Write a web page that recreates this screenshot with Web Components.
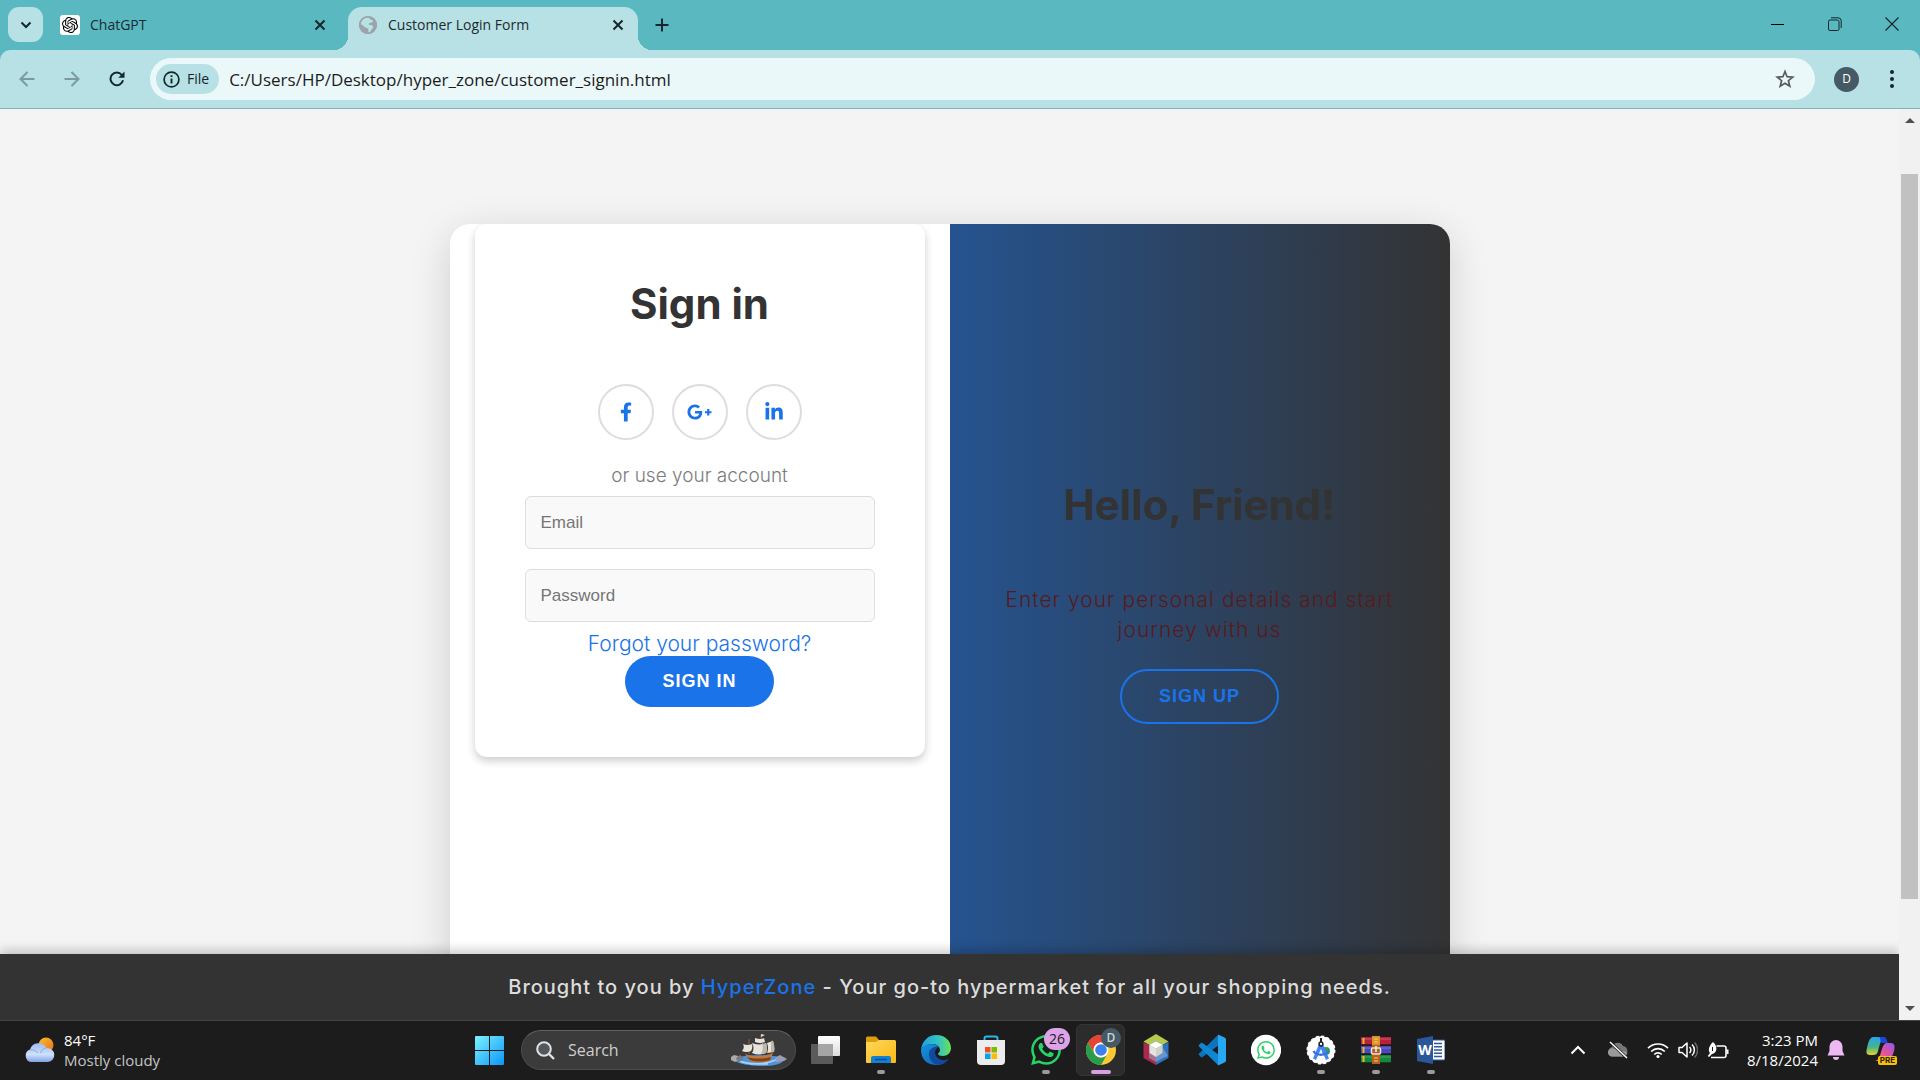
<!DOCTYPE html>
<html lang="en">
<head>
<meta charset="utf-8">
<title>Customer Login Form</title>
<style>
  html, body { margin: 0; height: 100%; }
  body {
    --strip: #5ab8c1;
    --chrome: #b7e1e5;
    --ink: #1d2b2e;
    --blue: #1a73e8;
    --dark: #333;
    --ui: "Open Sans", "Noto Sans", sans-serif;
    --body: Inter, "Open Sans", sans-serif;
    font-family: var(--ui);
    overflow: hidden;
    background: #1c1c1c;
  }
</style>
</head>
<body>
<desktop-screen></desktop-screen>
<script>
const define = (name, html) => {
  const template = document.createElement('template');
  template.innerHTML = `<style>
    *, *::before, *::after { box-sizing: border-box; }
    button { border: 0; margin: 0; padding: 0; background: none; color: inherit; font: inherit; display: grid; place-items: center; }
    svg { display: block; }
    a { text-decoration: none; }
  </style>` + html;
  customElements.define(name, class extends HTMLElement {
    constructor() {
      super();
      this.attachShadow({ mode: 'open' }).append(template.content.cloneNode(true));
    }
    connectedCallback() {
      for (const part of this.shadowRoot.querySelectorAll('[data-attrs]')) {
        for (const key of part.dataset.attrs.split(' ')) {
          if (this.hasAttribute(key)) part.setAttribute(key === 'label' ? 'aria-label' : key, this.getAttribute(key));
        }
      }
    }
  });
};

const WHATSAPP = 'M17.472 14.382c-.297-.149-1.758-.867-2.03-.967-.273-.099-.471-.148-.67.15-.197.297-.767.966-.94 1.164-.173.199-.347.223-.644.075-.297-.15-1.255-.463-2.39-1.475-.883-.788-1.48-1.761-1.653-2.059-.173-.297-.018-.458.13-.606.134-.133.298-.347.446-.52.149-.174.198-.298.298-.497.099-.198.05-.371-.025-.52-.075-.149-.669-1.612-.916-2.207-.242-.579-.487-.5-.669-.51-.173-.008-.371-.01-.57-.01-.198 0-.52.074-.792.372-.272.297-1.04 1.016-1.04 2.479 0 1.462 1.065 2.875 1.213 3.074.149.198 2.096 3.2 5.077 4.487.709.306 1.262.489 1.694.625.712.227 1.36.195 1.871.118.571-.085 1.758-.719 2.006-1.413.248-.694.248-1.289.173-1.413-.074-.124-.272-.198-.57-.347m-5.421 7.403h-.004a9.87 9.87 0 01-5.031-1.378l-.361-.214-3.741.982.998-3.648-.235-.374a9.86 9.86 0 01-1.51-5.26c.001-5.45 4.436-9.884 9.888-9.884 2.64 0 5.122 1.03 6.988 2.898a9.825 9.825 0 012.893 6.994c-.003 5.45-4.437 9.884-9.885 9.884m8.413-18.297A11.815 11.815 0 0012.05 0C5.495 0 .16 5.335.157 11.892c0 2.096.547 4.142 1.588 5.945L.057 24l6.305-1.654a11.882 11.882 0 005.683 1.448h.005c6.554 0 11.89-5.335 11.893-11.893a11.821 11.821 0 00-3.48-8.413z';

/* ---------- browser window ---------- */

define('browser-tab', `
<style>
  :host { display: flex; align-items: center; width: 290px; height: 43px; padding: 0 13px 8px 10px; gap: 10px; color: var(--ink); position: relative; }
  :host([active]) { background: var(--chrome); border-radius: 14px 14px 0 0; }
  :host([active])::before, :host([active])::after { content: ""; position: absolute; bottom: 0; width: 14px; height: 14px; }
  :host([active])::before { right: 100%; background: radial-gradient(circle at 0 0, transparent 14px, var(--chrome) 14px); }
  :host([active])::after { left: 100%; background: radial-gradient(circle at 100% 0, transparent 14px, var(--chrome) 14px); }
  .title { flex: 1; font-size: 14px; line-height: 20px; white-space: nowrap; }
  button { width: 14px; height: 14px; }
</style>
<slot name="icon"></slot>
<span class="title"><slot></slot></span>
<button aria-label="Close tab"><svg width="12" height="12" viewBox="0 0 12 12" stroke="#16262a" stroke-width="2" fill="none"><path d="M1.500 1.500l9 9M10.500 1.500l-9 9"/></svg></button>
`);

define('window-controls', `
<style>
  :host { display: flex; margin-left: auto; height: 48px; }
  button { width: 57px; height: 48px; }
</style>
<button aria-label="Minimize"><svg width="14" height="14" viewBox="0 0 14 14"><path d="M0 7.500h13" stroke="#000"/></svg></button>
<button aria-label="Restore"><svg width="14" height="14" viewBox="0 0 14 14" fill="none" stroke="#10282b"><rect x=".5" y="3" width="10.500" height="10.500" rx="1.500"/><path d="M3 .8h7.200a3 3 0 0 1 3 3V11"/></svg></button>
<button aria-label="Close"><svg width="14" height="14" viewBox="0 0 14 14" stroke="#10282b" stroke-width="1.200"><path d="M.5.5l13 13M13.500.5l-13 13"/></svg></button>
`);

define('tab-strip', `
<style>
  :host { display: flex; height: 50px; padding: 7px 0 0 8px; background: var(--strip); }
  .menu { width: 35px; height: 35px; border-radius: 11px; background: var(--chrome); margin-right: 7px; }
  .tabs { display: flex; gap: 8px; }
  .new { width: 28px; height: 35px; margin-left: 10px; }
  .badge { width: 20px; height: 20px; border-radius: 3px; background: #fff; display: grid; place-items: center; }
  window-controls { margin-top: -7px; }
</style>
<button class="menu" aria-label="Search tabs"><svg width="12" height="8" viewBox="0 0 12 8" fill="none" stroke="#10282b" stroke-width="2"><path d="M1.500 1.500L6 6l4.500-4.500"/></svg></button>
<div class="tabs">
  <browser-tab>
    <span slot="icon" class="badge"><svg width="16" height="16" viewBox="0 0 24 24"><path d="M22.2819 9.8211a5.9847 5.9847 0 0 0-.5157-4.9108 6.0462 6.0462 0 0 0-6.5098-2.9A6.0651 6.0651 0 0 0 4.9807 4.1818a5.9847 5.9847 0 0 0-3.9977 2.9 6.0462 6.0462 0 0 0 .7427 7.0966 5.98 5.98 0 0 0 .511 4.9107 6.051 6.051 0 0 0 6.5146 2.9001A5.9847 5.9847 0 0 0 13.2599 24a6.0557 6.0557 0 0 0 5.7718-4.2058 5.9894 5.9894 0 0 0 3.9977-2.9001 6.0557 6.0557 0 0 0-.7475-7.0729zm-9.022 12.6081a4.4755 4.4755 0 0 1-2.8764-1.0408l.1419-.0804 4.7783-2.7582a.7948.7948 0 0 0 .3927-.6813v-6.7369l2.02 1.1686a.071.071 0 0 1 .038.052v5.5826a4.504 4.504 0 0 1-4.4945 4.4944zm-9.6607-4.1254a4.4708 4.4708 0 0 1-.5346-3.0137l.142.0852 4.783 2.7582a.7712.7712 0 0 0 .7806 0l5.8428-3.3685v2.3324a.0804.0804 0 0 1-.0332.0615L9.74 19.9502a4.4992 4.4992 0 0 1-6.1408-1.6464zM2.3408 7.8956a4.485 4.485 0 0 1 2.3655-1.9728V11.6a.7664.7664 0 0 0 .3879.6765l5.8144 3.3543-2.0201 1.1685a.0757.0757 0 0 1-.071 0l-4.8303-2.7865A4.504 4.504 0 0 1 2.3408 7.872zm16.5963 3.8558L13.1038 8.364 15.1192 7.2a.0757.0757 0 0 1 .071 0l4.8303 2.7913a4.4944 4.4944 0 0 1-.6765 8.1042v-5.6772a.79.79 0 0 0-.407-.667zm2.0107-3.0231l-.142-.0852-4.7735-2.7818a.7759.7759 0 0 0-.7854 0L9.409 9.2297V6.8974a.0662.0662 0 0 1 .0284-.0615l4.8303-2.7866a4.4992 4.4992 0 0 1 6.6802 4.66zM8.3065 12.863l-2.02-1.1638a.0804.0804 0 0 1-.038-.0567V6.0742a4.4992 4.4992 0 0 1 7.3757-3.4537l-.142.0805L8.704 5.459a.7948.7948 0 0 0-.3927.6813zm1.0976-2.3654l2.602-1.4998 2.6069 1.4998v2.9994l-2.5974 1.4997-2.6067-1.4997Z"/></svg></span>
    ChatGPT
  </browser-tab>
  <browser-tab active>
    <svg slot="icon" width="20" height="20" viewBox="0 0 20 20"><circle cx="10" cy="10" r="9" fill="#9ca4ab"/><path d="M9.500 2.500c3 0 1.500 2 3.500 2.200 1.800.2 2.600 1.400 1.500 2.200-1.200.9-3 .4-3.600 1.600-.5 1.100.6 1.500 2 1.500 1.700.1 2.600 1.500 2 3-.7 1.800-2.700 2.100-2.800 3.900-.1 1-1.700.8-1.800-.4-.1-1.500.5-2.200-.3-3C9 12.700 7 13 6 11.600 5.300 10.500 4 9.500 2.600 9.300 3 5.500 5.800 2.600 9.500 2.500z" fill="#b7e1e5"/><circle cx="10" cy="10" r="8.300" fill="none" stroke="#9ca4ab" stroke-width="1.600"/></svg>
    Customer Login Form
  </browser-tab>
</div>
<button class="new" aria-label="New tab"><svg width="14" height="14" viewBox="0 0 14 14" stroke="#16262a" stroke-width="2"><path d="M7 .5v13M.5 7h13"/></svg></button>
<window-controls></window-controls>
`);

define('address-bar', `
<style>
  :host { display: flex; align-items: center; flex: 1; height: 42px; padding: 0 20px 0 6px; gap: 10px; border-radius: 21px; background: #ebf8f9; }
  .chip { display: flex; align-items: center; gap: 7px; height: 30px; padding: 0 10px 0 7px; border-radius: 15px; background: var(--chrome); font-size: 14px; line-height: 20px; color: #16262a; }
  input { flex: 1; min-width: 0; height: 30px; padding: 0; border: 0; outline: 0; background: none; font: 17px/24px var(--ui); color: #1c1c1c; }
</style>
<button class="chip"><svg width="17" height="17" viewBox="0 0 17 17"><circle cx="8.500" cy="8.500" r="7.400" fill="none" stroke="#10282b" stroke-width="1.700"/><path d="M8.500 4.200v1.900M8.500 7.500v5" stroke="#10282b" stroke-width="1.900"/></svg>File</button>
<input type="text" aria-label="Address" value="C:/Users/HP/Desktop/hyper_zone/customer_signin.html">
<button aria-label="Bookmark"><svg width="20" height="20" viewBox="0 0 20 20" fill="none" stroke="#57595c" stroke-width="1.700"><path d="M10 2.500l2.100 5.200 5.600.4-4.300 3.600 1.400 5.500L10 14.200l-4.800 3 1.400-5.500L2.300 8.100l5.600-.4z"/></svg></button>
`);

define('browser-toolbar', `
<style>
  :host { display: block; background: var(--strip); }
  .bar { display: flex; align-items: center; height: 59px; padding: 0 17px 0 11px; background: var(--chrome); border-bottom: 1px solid #87b0b6; border-radius: 10px 10px 0 0; }
  nav { display: flex; gap: 13px; margin-right: 17px; }
  nav button { width: 32px; height: 32px; }
  .avatar { width: 25px; height: 25px; margin: 0 22px 0 19px; border-radius: 50%; background: #455a64; color: #fff; font-size: 12px; line-height: 16px; }
  .more { width: 22px; height: 32px; }
</style>
<div class="bar">
  <nav>
    <button aria-label="Back"><svg width="16" height="16" viewBox="0 0 16 16" fill="none" stroke="#7c9a9e" stroke-width="2"><path d="M15.500 8H2M8.500 1L1.500 8l7 7"/></svg></button>
    <button aria-label="Forward"><svg width="16" height="16" viewBox="0 0 16 16" fill="none" stroke="#7c9a9e" stroke-width="2"><path d="M.5 8H14M7.500 1l7 7-7 7"/></svg></button>
    <button aria-label="Reload"><svg width="16" height="16" viewBox="0 0 16 16"><path d="M14 9.200A6.300 6.300 0 1 1 12.800 4" fill="none" stroke="#10282b" stroke-width="2"/><path d="M15.500.5v6.200H9.300z" fill="#10282b"/></svg></button>
  </nav>
  <address-bar></address-bar>
  <button class="avatar">D</button>
  <button class="more" aria-label="Menu"><svg width="4" height="18" viewBox="0 0 4 18" fill="#16262a"><circle cx="2" cy="2" r="2"/><circle cx="2" cy="9" r="2"/><circle cx="2" cy="16" r="2"/></svg></button>
</div>
`);

define('page-scrollbar', `
<style>
  :host { display: flex; flex-direction: column; align-items: center; width: 21px; background: #f1f1f1; }
  svg { margin: 9px 0; }
  .track { flex: 1; width: 17px; display: flex; flex-direction: column; }
  .above { flex: 42; } .thumb { flex: 725; background: #c1c1c1; } .below { flex: 98; }
</style>
<svg width="10" height="5" viewBox="0 0 10 5"><path d="M0 5L5 0l5 5z" fill="#505050"/></svg>
<div class="track"><div class="above"></div><div class="thumb"></div><div class="below"></div></div>
<svg width="10" height="5" viewBox="0 0 10 5"><path d="M0 0l5 5 5-5z" fill="#505050"/></svg>
`);

/* ---------- login page ---------- */

define('social-link', `
<style>
  :host { display: block; }
  a { display: grid; place-items: center; width: 56px; height: 56px; border: 2px solid #ddd; border-radius: 50%; color: var(--blue); }
</style>
<a href="#" data-attrs="label"><slot></slot></a>
`);

define('form-field', `
<style>
  :host { display: block; }
  input { display: block; width: 100%; height: 53px; padding: 0 15px; border: 1px solid #ddd; border-radius: 6px; background: #f9f9f9; outline: 0; font: 17px/24px "Liberation Sans", Arial, sans-serif; color: #333; }
  input::placeholder { color: #757575; }
</style>
<input data-attrs="type placeholder label">
`);

define('pill-button', `
<style>
  :host { display: block; }
  button { padding: 15px 37px; border-radius: 28px; background: var(--blue); color: #fff; font: bold 18px/21px "Liberation Sans", Arial, sans-serif; letter-spacing: 1px; }
  :host([ghost]) button { border: 2px solid var(--blue); background: transparent; color: var(--blue); }
</style>
<button><slot></slot></button>
`);

define('page-heading', `
<style>
  :host { display: block; }
  h1 { margin: 0 0 50px; font: 700 42px/60px var(--body); color: var(--dark); text-align: center; }
</style>
<h1><slot></slot></h1>
`);

define('signin-form', `
<style>
  :host { display: block; flex: none; width: 50%; padding: 0 25px; }
  form { display: flex; flex-direction: column; align-items: center; padding: 50px; border-radius: 12px; background: #fff; box-shadow: 0 4px 8px rgba(0, 0, 0, .2); }
  .social { display: flex; gap: 18px; }
  .hint { margin: 24px 0 8px; font: 300 19px/24px var(--body); color: #7c7c7c; }
  form-field { width: 100%; }
  form-field + form-field { margin-top: 20px; }
  .forgot { margin-top: 10px; font: 300 21px/24px var(--body); color: var(--blue); }
</style>
<form>
  <page-heading>Sign in</page-heading>
  <div class="social">
    <social-link label="Facebook"><svg width="12" height="20" viewBox="0 0 320 512" fill="currentColor"><path d="M279.14 288l14.22-92.66h-88.91v-60.13c0-25.35 12.42-50.06 52.24-50.06h40.42V6.26S260.43 0 225.36 0c-73.22 0-121.08 44.38-121.08 124.72v70.62H22.89V288h81.39v224h100.17V288z"/></svg></social-link>
    <social-link label="Google Plus"><svg width="25" height="20" viewBox="0 0 640 512" fill="currentColor"><path d="M386.061 228.496c1.834 9.692 3.143 19.384 3.143 31.956C389.204 370.205 315.599 448 204.8 448c-106.084 0-192-85.915-192-192s85.916-192 192-192c51.864 0 95.083 18.859 128.611 50.292l-52.126 50.03c-14.145-13.621-39.028-29.599-76.485-29.599-65.484 0-118.92 54.221-118.92 121.277 0 67.056 53.436 121.277 118.92 121.277 75.961 0 104.513-54.745 108.965-82.773H204.8v-66.009h181.261zm185.406 6.437V179.2h-56.001v55.733h-55.733v56.001h55.733v55.733h56.001v-55.733H627.2v-56.001h-55.733z"/></svg></social-link>
    <social-link label="LinkedIn"><svg width="18" height="20" viewBox="0 0 448 512" fill="currentColor"><path d="M100.28 448H7.4V148.9h92.88zM53.79 108.1C24.09 108.1 0 83.5 0 53.8a53.79 53.79 0 0 1 107.58 0c0 29.700-24.100 54.300-53.790 54.300zM447.9 448h-92.680V302.400c0-34.700-.7-79.200-48.290-79.200-48.290 0-55.690 37.700-55.690 76.700V448h-92.780V148.900h89.080v40.800h1.300c12.400-23.500 42.690-48.300 87.880-48.300 94 0 111.280 61.900 111.280 142.300V448z"/></svg></social-link>
  </div>
  <span class="hint">or use your account</span>
  <form-field type="email" placeholder="Email" label="Email"></form-field>
  <form-field type="password" placeholder="Password" label="Password"></form-field>
  <a class="forgot" href="#">Forgot your password?</a>
  <pill-button>SIGN IN</pill-button>
</form>
`);

define('welcome-panel', `
<style>
  :host { display: flex; flex: none; width: 50%; flex-direction: column; align-items: center; justify-content: center; padding: 0 50px; background: linear-gradient(to right, #25538f, #333); }
  p { margin: 0 0 24px; font: 300 21px/30px var(--body); letter-spacing: 1px; color: #571b1e; text-align: center; }
</style>
<page-heading>Hello, Friend!</page-heading>
<p>Enter your personal details and start journey with us</p>
<pill-button ghost>SIGN UP</pill-button>
`);

define('site-footer', `
<style>
  :host { display: block; position: relative; padding: 18px 20px; background: var(--dark); box-shadow: 0 -4px 10px rgba(0, 0, 0, .2); text-align: center; font: 500 20px/30px var(--body); letter-spacing: 1px; color: #ddd; }
  p { margin: 0; }
  a { color: var(--blue); }
</style>
<p>Brought to you by <a href="#">HyperZone</a> - Your go-to hypermarket for all your shopping needs.</p>
`);

define('login-page', `
<style>
  :host { display: flex; flex: 1; flex-direction: column; min-width: 0; overflow: hidden; background: #f4f4f4; }
  main { flex: 1; min-height: 0; overflow: hidden; padding: 115px 20px 0; }
  .card { display: flex; align-items: stretch; width: 100%; max-width: 1000px; min-height: 750px; margin: 0 auto; border-radius: 20px; overflow: hidden; background: #fff; box-shadow: 0 10px 40px rgba(0, 0, 0, .15); }
</style>
<main><div class="card"><signin-form></signin-form><welcome-panel></welcome-panel></div></main>
<site-footer></site-footer>
`);

/* ---------- taskbar ---------- */

define('task-button', `
<style>
  :host { display: block; position: relative; width: 55px; height: 60px; }
  button { width: 100%; height: 100%; position: relative; }
  :host([active]) button::before { content: ""; position: absolute; inset: 4px 3px; border-radius: 6px; background: #2c2c2c; border: 1px solid #353535; }
  slot { position: relative; }
  ::slotted(svg) { display: block; position: relative; }
  :host([running])::after, :host([active])::after { content: ""; position: absolute; left: 50%; bottom: 6px; width: 8px; height: 4px; margin-left: -4px; border-radius: 2px; background: #9a9a9a; }
  :host([active])::after { width: 20px; margin-left: -10px; background: #d99fe3; }
</style>
<button data-attrs="label"><slot></slot></button>
<slot name="badge"></slot>
`);

define('task-search', `
<style>
  :host { display: flex; align-items: center; gap: 13px; width: 275px; height: 40px; padding: 0 7px 0 14px; border-radius: 20px; background: #3b3b3b; border: 1px solid #4c4c4c; border-top-color: #626262; }
  input { flex: 1; min-width: 0; padding: 0; border: 0; outline: 0; background: none; font: 16px/22px var(--ui); color: #fff; }
  input::placeholder { color: #cfcfcf; }
</style>
<svg width="19" height="19" viewBox="0 0 19 19" fill="none" stroke="#dfe2e5" stroke-width="2"><circle cx="8" cy="8" r="6.800" fill="#55585a"/><path d="M13 13l5 5" stroke-width="2.400"/></svg>
<input type="search" placeholder="Search" aria-label="Search">
<svg width="58" height="32" viewBox="0 0 58 32">
  <path d="M3 25c8-5 46-5 51 0 0 4-8 7-20 7S8 31 3 25z" fill="#4f93dd"/><path d="M10 27c8 4 26 3 36-1M20 30h18" stroke="#a7d2f6" stroke-width="1.500" fill="none"/>
  <path d="M1 23l3-2 4 1 1 4-4 2-4-2z" fill="#a9abae"/><path d="M6 24l4-3 3 2v3l-5 2z" fill="#777a80"/><path d="M45 24l5-3 7 4-3 2-8 1z" fill="#9a9fb8"/>
  <path d="M15 20c8 3 18 3 28-1l-3 8c-6 2-14 2-20 0z" fill="#c07b43"/><path d="M17 23c7 2 16 2 24 0l-1 3c-6 2-14 2-20 0z" fill="#80431f"/>
  <path d="M31 1v19M19 5v15M42 6v14" stroke="#8b5a35" stroke-width="1.200"/>
  <path d="M25 4q6 2 9 0l1 4q-5 2-10 0zM22 9q8 3 14 0 2 5 0 10-7 3-14 0 3-5 0-10zM13 10q5 2 9 0 1 4-1 7-5 2-9 0 3-3 1-7zM37 9l6-2q2 6 1 11l-7 1q2-5 0-10z" fill="#e8e4dc"/>
  <path d="M32 9q4 2 4 0 2 5 0 10-3 1-5 1 3-5 1-11zM41 8l2-1q2 6 1 11h-3z" fill="#bdb6aa"/><path d="M31 0l4 1-4 2z" fill="#ddd"/>
</svg>
`);

define('weather-widget', `
<style>
  :host { display: flex; align-items: center; gap: 9px; padding-left: 24px; color: #fff; font-size: 15px; line-height: 20px; }
  .sky { color: #c4c4c4; }
</style>
<svg width="31" height="26" viewBox="0 0 31 26">
  <defs><linearGradient id="sun" x2="1" y2="1"><stop stop-color="#f6c02f"/><stop offset="1" stop-color="#ee6a17"/></linearGradient><linearGradient id="sky" x2="0" y2="1"><stop stop-color="#9dbdf0"/><stop offset=".6" stop-color="#cfe0fa"/><stop offset="1" stop-color="#7fa3e6"/></linearGradient></defs>
  <circle cx="22" cy="8" r="7.500" fill="url(#sun)"/><path d="M7 25a6.500 6.500 0 0 1-1-12.500A9 9 0 0 1 22.500 11 7 7 0 0 1 24 25z" fill="url(#sky)"/><path d="M6 13c3-.5 6 .5 8 3M22.500 11c-3 0-5 2-6 5" stroke="#86a7e4" fill="none"/>
</svg>
<div><div>84°F</div><div class="sky">Mostly cloudy</div></div>
`);

define('system-tray', `
<style>
  :host { display: flex; align-items: center; justify-content: flex-end; padding-right: 23px; color: #fff; font-size: 15px; line-height: 20px; }
  .chevron { margin-right: 21px; } .cloud { margin-right: 18px; } .status { display: flex; align-items: center; gap: 9px; margin-right: 18px; }
  .clock { text-align: right; margin-right: 9px; }
  .clock div { white-space: nowrap; }
  .bell { margin-right: 21px; }
  .copilot { position: relative; width: 31px; height: 28px; }
  .copilot span { position: absolute; right: 0; bottom: -1px; padding: 0 2px; border-radius: 2px; background: #fbc100; color: #222; font: 700 8px/9px Inter, sans-serif; }
</style>
<button class="chevron" aria-label="Hidden icons"><svg width="16" height="10" viewBox="0 0 16 10" fill="none" stroke="#fff" stroke-width="2"><path d="M1.500 8.500L8 2l6.500 6.500"/></svg></button>
<svg class="cloud" width="22" height="18" viewBox="0 0 22 18"><path d="M5 15.500A5 5 0 0 1 5 6a6 6 0 0 1 11-1 5.500 5.500 0 0 1 1 10.500z" fill="#777"/><path d="M4 15.500a4 4 0 0 1 2-8c4 0 6 2 8 3 2-1 5 0 6 2a4 4 0 0 1-3 3z" fill="#9a9a9a"/><path d="M3 1l17 16" stroke="#1c1c1c" stroke-width="3"/><path d="M3 1l17 16" stroke="#fff" stroke-width="1.500"/></svg>
<div class="status">
  <svg width="22" height="17" viewBox="0 0 22 17" fill="none" stroke="#fff" stroke-width="1.700"><path d="M1 6.200a14 14 0 0 1 20 0M4.200 9.500a9.600 9.600 0 0 1 13.600 0M7.300 12.500a5.200 5.200 0 0 1 7.400 0"/><circle cx="11" cy="14.500" r="1.600" fill="#fff" stroke="none"/></svg>
  <svg width="20" height="18" viewBox="0 0 20 18" fill="none" stroke="#fff" stroke-width="1.500"><path d="M1 6.500h3L9 2v14l-5-4.500H1z" stroke-linejoin="round"/><path d="M11.500 6a4 4 0 0 1 0 6M14 3.500a7.500 7.500 0 0 1 0 11"/><path d="M16.500 1.500a10.500 10.500 0 0 1 0 15" stroke="#666"/></svg>
  <svg width="22" height="19" viewBox="0 0 22 19"><path d="M9.500 5H17a2 2 0 0 1 2 2v7.500a2 2 0 0 1-2 2H4" fill="none" stroke="#fff" stroke-width="1.600"/><path d="M19.500 8.500h2V13h-2z" fill="#fff"/><path d="M6 1c3 2.500 4 6 3 9-1 2-3 3-4 3l-3 3-1.200-1L3 12C1 10 1.500 5 6 1z" fill="#fff"/><path d="M5.500 6v4" stroke="#1c1c1c"/></svg>
</div>
<div class="clock"><div>3:23 PM</div><div>8/18/2024</div></div>
<svg class="bell" width="18" height="20" viewBox="0 0 18 20" fill="#ecb9f3"><path d="M9 0a6.500 6.500 0 0 1 6.500 6.500V11l2 4.500H.5l2-4.500V6.500A6.500 6.500 0 0 1 9 0zM6 17h6a3 3 0 0 1-6 0z"/></svg>
<div class="copilot"><svg width="29" height="26" viewBox="0 0 29 26">
  <defs><linearGradient id="c1" x2="0" y2="1"><stop stop-color="#27a4f2"/><stop offset=".55" stop-color="#43b48c"/><stop offset="1" stop-color="#e8cf2a"/></linearGradient><linearGradient id="c2" x1="1" x2="0" y2="1"><stop stop-color="#8d5cf5"/><stop offset=".5" stop-color="#e4509e"/><stop offset="1" stop-color="#f9874b"/></linearGradient></defs>
  <path d="M7 1h11c-3 2-4 7-6 14-1 3-2 4-5 4H4c-4 0-4-3-3-7C2 6 4 1 7 1z" fill="url(#c1)"/><path d="M13 1h5c3 0 3 5 4 6h-6c-2 0-1-5-3-6z" fill="#1b47d8"/><path d="M21 7h4c4 0 4 4 3 8-2 6-3 10-7 10H9c4-1 5-5 6-9 2-6 3-9 6-9z" fill="url(#c2)"/>
</svg><span>PRE</span></div>
`);

define('task-bar', `
<style>
  :host { display: grid; grid-template-columns: 1fr auto 1fr; height: 60px; background: #1c1c1c; box-shadow: inset 0 1px #434343; }
  .apps { display: flex; align-items: center; }
  task-search { margin: 0 2px 0 4px; }
  .count, .initial { position: absolute; top: 8px; border-radius: 12px; text-align: center; }
  .count { right: 3px; width: 26px; height: 22px; background: #dda3e8; color: #1c1c1c; font: 14px/21px var(--ui); }
  .initial { right: 7px; width: 20px; height: 20px; background: #455a64; color: #cdd5d8; font: 600 12px/20px var(--ui); }
</style>
<weather-widget></weather-widget>
<div class="apps">
  <task-button label="Start"><svg width="29" height="29" viewBox="0 0 29 29"><defs><linearGradient id="w" x2="1" y2="1"><stop stop-color="#7df2fd"/><stop offset="1" stop-color="#0c95fb"/></linearGradient></defs><path d="M0 1a1 1 0 0 1 1-1h13v14H0zM15 0h13a1 1 0 0 1 1 1v13H15zM0 15h14v14H1a1 1 0 0 1-1-1zM15 15h14v13a1 1 0 0 1-1 1H15z" fill="url(#w)"/></svg></task-button>
  <task-search></task-search>
  <task-button label="Task view"><svg width="30" height="30" viewBox="0 0 30 30"><defs><linearGradient id="tv" x2="0" y2="1"><stop stop-color="#fff"/><stop offset="1" stop-color="#ddd"/></linearGradient></defs><rect x="0" y="9" width="22" height="20" rx="1" fill="#5b5b5b"/><rect x="7" y="1" width="22" height="20" rx="1" fill="url(#tv)"/><rect x="7" y="9" width="15" height="12" fill="#a5a5a5"/></svg></task-button>
  <task-button label="File Explorer" running><svg width="30" height="28" viewBox="0 0 30 28"><defs><linearGradient id="fo" x2="1" y2="1"><stop stop-color="#ffd75c"/><stop offset="1" stop-color="#fbb912"/></linearGradient></defs><path d="M0 2a1.500 1.500 0 0 1 1.500-1.500H10L13 4h16v6H0z" fill="#dd9e0c"/><path d="M0 6h10l3-2h15.500A1.500 1.500 0 0 1 30 5.500V26a1 1 0 0 1-1 1H1a1 1 0 0 1-1-1z" fill="url(#fo)"/><path d="M5 27v-5a2 2 0 0 1 2-2h16a2 2 0 0 1 2 2v5z" fill="#1380d2"/><path d="M9 23.500h12" stroke="#0b4d94" stroke-width="1.500"/></svg></task-button>
  <task-button label="Edge"><svg width="30" height="30" viewBox="0 0 30 30"><defs><linearGradient id="e1" x2="1"><stop stop-color="#1f9fe0"/><stop offset=".6" stop-color="#35c4c0"/><stop offset="1" stop-color="#6be053"/></linearGradient><linearGradient id="e2" x2="1" y2="1"><stop stop-color="#1793dc"/><stop offset="1" stop-color="#0c5fb4"/></linearGradient></defs><path d="M0 15C1 6 7 0 15.500 0 24 0 30 6 30 13c0 5-4 8-8 8-3 0-5-1-5-2 0-1 2-1.500 2-4 0-3-3-6-7.500-6C6 9 1 12 0 15z" fill="url(#e1)"/><path d="M0 15c1-3 5-6 10-6 4 0 6 1 8 3-4-1-7 1-7.500 5C10 23 14 27 19 27c3 0 5-1 7-2-2 3-6 5-10.500 5C6 30 0 24 0 15z" fill="url(#e2)"/><path d="M18 12c-5-1-10 2-10 7 0 6 5 11 10 10.800C22 29.500 25 27.500 27 25c.5-.6 0-1-.7-.7-5.300 2.700-12.300-1-12.300-7 0-2.500 2-4.500 4-5.300z" fill="#114a9c"/></svg></task-button>
  <task-button label="Store"><svg width="30" height="30" viewBox="0 0 30 30"><path d="M8.500 8V3.500a2 2 0 0 1 2-2h9a2 2 0 0 1 2 2V8" fill="none" stroke="#2bb5ee" stroke-width="2"/><path d="M1 5h28v21a4 4 0 0 1-4 4H5a4 4 0 0 1-4-4z" fill="#ececec"/><path d="M9 12h5.500v5.500H9z" fill="#f25022"/><path d="M15.500 12H21v5.500h-5.500z" fill="#7fba00"/><path d="M9 18.500h5.500V24H9z" fill="#00a4ef"/><path d="M15.500 18.500H21V24h-5.500z" fill="#ffb900"/></svg></task-button>
  <task-button label="WhatsApp" running><svg width="30" height="30" viewBox="0 0 24 24" fill="#25d366"><path d="${WHATSAPP}"/></svg><span slot="badge" class="count">26</span></task-button>
  <task-button label="Chrome" active><svg width="30" height="30" viewBox="0 0 30 30"><circle cx="15" cy="15" r="15" fill="#fcc934"/><path d="M2 7.500a15 15 0 0 1 26 0H15a7.500 7.500 0 0 0-6.500 11.200z" fill="#ea4335"/><path d="M2 7.500l6.500 11.200A7.500 7.500 0 0 0 21.500 18.700L15 30A15 15 0 0 1 2 7.500z" fill="#2a9d4c"/><circle cx="15" cy="15" r="7.500" fill="#fff"/><circle cx="15" cy="15" r="5.800" fill="#3b80ec"/></svg><span slot="badge" class="initial">D</span></task-button>
  <task-button label="NetBeans"><svg width="28" height="32" viewBox="0 0 28 32"><path d="M14 0l12.500 7.500L14 15 1.500 7.500z" fill="#b3ca4b"/><path d="M1.500 8L14 15v16L1.500 24z" fill="#a92b4c"/><path d="M26.500 8L14 15v16l12.500-7z" fill="#2f72bd"/><path d="M14 6l7 4v4l5 8-5 2-7 4-7-4V10z" fill="#9fb9da" opacity=".5"/><path d="M14 7.500l6.500 3.500L14 14.500 7.500 11z" fill="#fff"/><path d="M7.500 11l6.500 3.500V23l-6.500-4z" fill="#e4e4df"/><path d="M20.500 11L14 14.500V23l6.500-4z" fill="#cfd1cb"/></svg></task-button>
  <task-button label="Visual Studio Code"><svg width="30" height="32" viewBox="0 0 30 32"><path d="M22 1l-19 18.500a1 1 0 0 0 0 1.500l2 2c.5.500 1 .4 1.500 0L23 11V1z" fill="#0b74be"/><path d="M22 31L3 12.500a1 1 0 0 1 0-1.500l2-2c.5-.5 1-.4 1.500 0L23 21v10z" fill="#1087d3"/><path d="M22 .5l7 3.200a2 2 0 0 1 1 1.700v21.200a2 2 0 0 1-1 1.700l-7 3.200z" fill="#29a8f2"/></svg></task-button>
  <task-button label="WhatsApp Web"><svg width="30" height="32" viewBox="0 0 30 32"><circle cx="15" cy="16" r="15.200" fill="#fff"/><g transform="translate(6 7) scale(.75)" fill="#2fd066"><path d="${WHATSAPP}"/></g></svg></task-button>
  <task-button label="Android Studio" running><svg width="30" height="32" viewBox="0 0 30 32"><circle cx="15" cy="16" r="13.800" fill="#fff"/><circle cx="15" cy="16" r="13.800" fill="none" stroke="#fff" stroke-width="1.400" stroke-dasharray="3 2.400"/><circle cx="20" cy="17" r="4" fill="#30a04c"/><path d="M13 10h4l6 14.500-3 1.500-5-11-5 11-3-1.500z" fill="#4285f4"/><path d="M7.500 17c3 5 12 5 15 0" fill="none" stroke="#3a72dc" stroke-width="2.400"/><path d="M15 4v4" stroke="#222" stroke-width="2"/><circle cx="15" cy="10" r="1.900" fill="#fff" stroke="#222" stroke-width="1.500"/></svg></task-button>
  <task-button label="WinRAR" running><svg width="30" height="28" viewBox="0 0 30 28"><path d="M0 1h30v8H0z" fill="#b8203c"/><path d="M0 10h30v8H0z" fill="#4b48b9"/><path d="M0 19h30v8H0z" fill="#128a3a"/><path d="M0 3h30M0 12h30M0 21h30" stroke="#fff" opacity=".25"/><path d="M0 8.500h30M0 17.500h30M0 26.500h30" stroke="#111" opacity=".6"/><path d="M2.500 2v6M2.500 11v6M2.500 20v6" stroke="#f0b429" stroke-width="2"/><path d="M11 0h8v28h-8z" fill="#b9601c"/><path d="M11 0h8v9h-8z" fill="#d9952a"/><path d="M13 3h4M13 6h4M13 22h4M13 25h4" stroke="#f7d06b"/><rect x="10.500" y="12" width="9" height="6" rx="1" fill="none" stroke="#e3e3e3" stroke-width="1.500"/><path d="M15 10v6" stroke="#f6f6f6" stroke-width="1.500"/></svg></task-button>
  <task-button label="Word" running><svg width="28" height="28" viewBox="0 0 28 28"><path d="M15 4h12a1 1 0 0 1 1 1v18a1 1 0 0 1-1 1H15z" fill="#fff" stroke="#2b579a"/><path d="M17 7.500h8M17 10.800h8M17 14h8M17 17.200h8M17 20.500h8" stroke="#2b579a" stroke-width="1.600"/><path d="M0 3l16-3v28L0 25z" fill="#2b579a"/><text x="8" y="19" text-anchor="middle" font-family="Open Sans, sans-serif" font-size="14" font-weight="700" fill="#fff">W</text></svg></task-button>
</div>
<system-tray></system-tray>
`);

define('desktop-screen', `
<style>
  :host { display: flex; flex-direction: column; height: 100vh; }
  .view { display: flex; flex: 1; min-height: 0; }
</style>
<tab-strip></tab-strip>
<browser-toolbar></browser-toolbar>
<div class="view"><login-page></login-page><page-scrollbar></page-scrollbar></div>
<task-bar></task-bar>
`);
</script>
</body>
</html>
